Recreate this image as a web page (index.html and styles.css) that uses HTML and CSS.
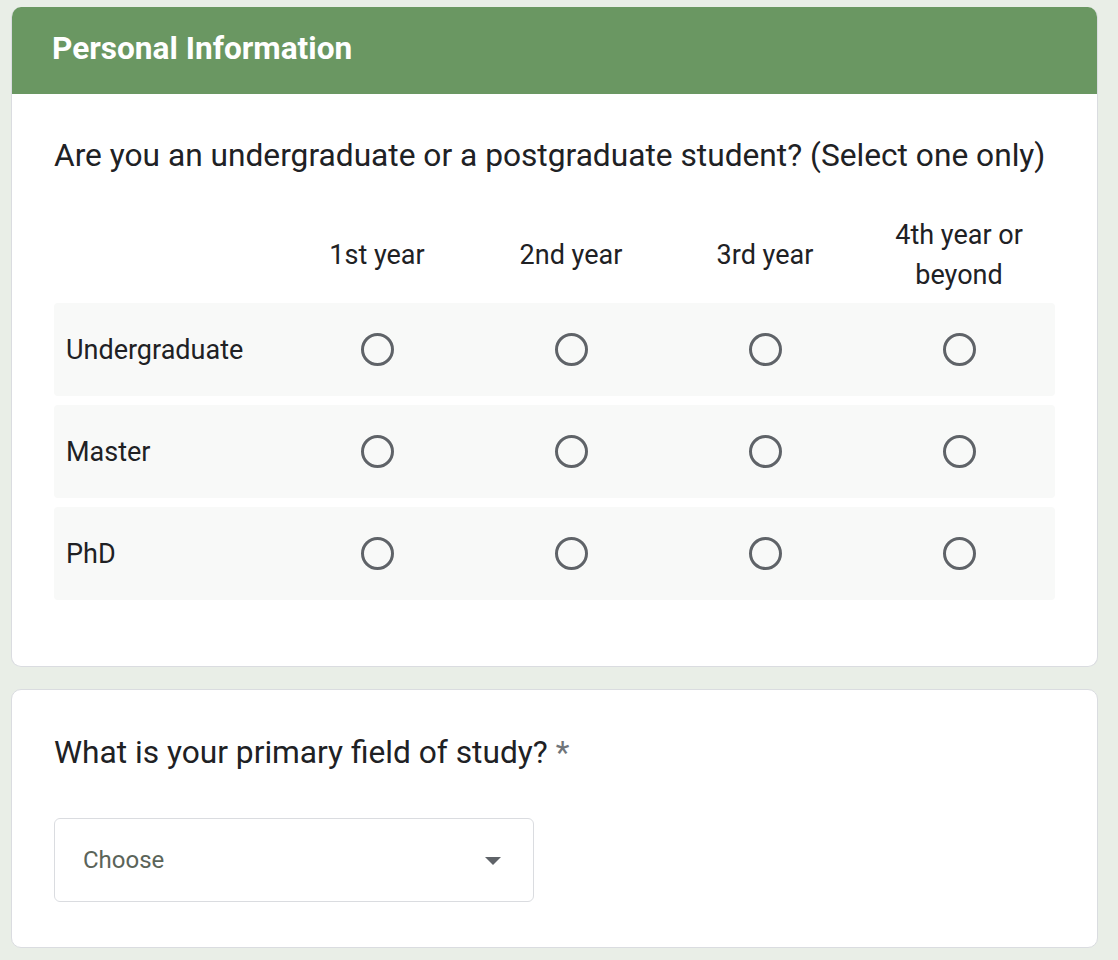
FILE: index.html
```html
<!DOCTYPE html>
<html>
<head>
<meta charset="utf-8">
<link rel="stylesheet" href="styles.css">
</head>
<body>
<div class="page">
  <section class="card card-first">
    <div class="card-header">Personal Information</div>
    <div class="card-body">
      <div class="question">Are you an undergraduate or a postgraduate student? (Select one only)</div>
      <div class="grid">
        <div class="grid-head">
          <div class="label-cell"></div>
          <div class="col-head">1st year</div>
          <div class="col-head">2nd year</div>
          <div class="col-head">3rd year</div>
          <div class="col-head">4th year or<br>beyond</div>
        </div>
        <div class="grid-row">
          <div class="label-cell">Undergraduate</div>
          <div class="cell"><span class="radio"></span></div>
          <div class="cell"><span class="radio"></span></div>
          <div class="cell"><span class="radio"></span></div>
          <div class="cell"><span class="radio"></span></div>
        </div>
        <div class="grid-row">
          <div class="label-cell">Master</div>
          <div class="cell"><span class="radio"></span></div>
          <div class="cell"><span class="radio"></span></div>
          <div class="cell"><span class="radio"></span></div>
          <div class="cell"><span class="radio"></span></div>
        </div>
        <div class="grid-row">
          <div class="label-cell">PhD</div>
          <div class="cell"><span class="radio"></span></div>
          <div class="cell"><span class="radio"></span></div>
          <div class="cell"><span class="radio"></span></div>
          <div class="cell"><span class="radio"></span></div>
        </div>
      </div>
    </div>
  </section>
  <section class="card card-second">
    <div class="card-body body-second">
      <div class="question">What is your primary field of study? <span class="req">*</span></div>
      <div class="select">
        <span class="select-text">Choose</span>
        <span class="caret"></span>
      </div>
    </div>
  </section>
</div>
</body>
</html>
```

FILE: styles.css
```css
html, body {
  margin: 0;
  padding: 0;
  background: #e9eee7;
}
body {
  font-family: Roboto, "Noto Sans", "Liberation Sans", sans-serif;
  color: #202124;
}
.page {
  padding: 7px 20px 14px 11px;
  display: flex;
  flex-direction: column;
  gap: 22px;
}
.card {
  background: #ffffff;
  border: 1px solid #dadce0;
  border-radius: 10px;
  overflow: hidden;
}
.card-first {
  border-top: none;
}
.card-header {
  background: #6a9762;
  color: #ffffff;
  font-weight: 700;
  font-size: 31.6px;
  height: 87px;
  box-sizing: border-box;
  padding: 24px 0 0 40px;
  line-height: 36px;
}
.card-body {
  padding: 44px 42px 66px 42px;
}
.question {
  font-size: 31.7px;
  line-height: 36px;
}
.req {
  color: #70757a;
}
.grid {
  margin-top: 41px;
  display: flex;
  flex-direction: column;
  gap: 9px;
}
.grid-head, .grid-row {
  display: grid;
  grid-template-columns: 226px repeat(4, 194px);
  align-items: center;
}
.grid-head {
  font-size: 27px;
  line-height: 40px;
  text-align: center;
  margin-bottom: -1px;
}
.grid-row {
  background: #f8f9f8;
  height: 93px;
  border-radius: 4px;
}
.label-cell {
  font-size: 27px;
  padding-left: 12px;
  text-align: left;
}
.cell {
  display: flex;
  justify-content: center;
}
.radio {
  display: block;
  width: 27px;
  height: 27px;
  border: 3px solid #5f6368;
  border-radius: 50%;
}
.body-second {
  padding: 45px 42px 45px 42px;
}
.question + .select {
  margin-top: 47px;
}
.select {
  width: 480px;
  height: 84px;
  box-sizing: border-box;
  border: 1px solid #dadce0;
  border-radius: 6px;
  display: flex;
  align-items: center;
  justify-content: space-between;
  padding: 0 32px 0 28px;
}
.select-text {
  font-size: 24px;
  color: #5b6459;
}
.caret {
  width: 0;
  height: 0;
  border-left: 8px solid transparent;
  border-right: 8px solid transparent;
  border-top: 8px solid #5f6368;
  margin-top: 2px;
}
```
